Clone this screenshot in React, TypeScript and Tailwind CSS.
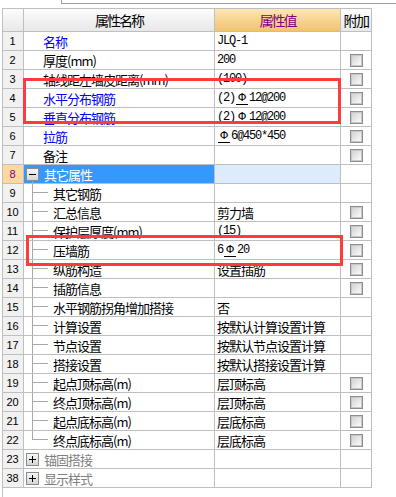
import React from 'react';

type Kind = 'top' | 'child' | 'last' | 'open' | 'closed';
type Row = {
  n: string;
  name: string;
  val?: string;
  cb?: boolean;
  blue?: boolean;
  kind: Kind;
  selected?: boolean;
};

const rows: Row[] = [
  { n: '1', name: '名称', val: 'JLQ-1', blue: true, kind: 'top' },
  { n: '2', name: '厚度(mm)', val: '200', cb: true, kind: 'top' },
  { n: '3', name: '轴线距左墙皮距离(mm)', val: '(100)', cb: true, kind: 'top' },
  { n: '4', name: '水平分布钢筋', val: '(2)Φ12@200', cb: true, blue: true, kind: 'top' },
  { n: '5', name: '垂直分布钢筋', val: '(2)Φ12@200', cb: true, blue: true, kind: 'top' },
  { n: '6', name: '拉筋', val: 'Φ6@450*450', cb: true, blue: true, kind: 'top' },
  { n: '7', name: '备注', val: '', cb: true, kind: 'top' },
  { n: '8', name: '其它属性', kind: 'open', selected: true },
  { n: '9', name: '其它钢筋', kind: 'child' },
  { n: '10', name: '汇总信息', val: '剪力墙', cb: true, kind: 'child' },
  { n: '11', name: '保护层厚度(mm)', val: '(15)', cb: true, kind: 'child' },
  { n: '12', name: '压墙筋', val: '6Φ20', cb: true, kind: 'child' },
  { n: '13', name: '纵筋构造', val: '设置插筋', cb: true, kind: 'child' },
  { n: '14', name: '插筋信息', val: '', cb: true, kind: 'child' },
  { n: '15', name: '水平钢筋拐角增加搭接', val: '否', kind: 'child' },
  { n: '16', name: '计算设置', val: '按默认计算设置计算', kind: 'child' },
  { n: '17', name: '节点设置', val: '按默认节点设置计算', kind: 'child' },
  { n: '18', name: '搭接设置', val: '按默认搭接设置计算', kind: 'child' },
  { n: '19', name: '起点顶标高(m)', val: '层顶标高', cb: true, kind: 'child' },
  { n: '20', name: '终点顶标高(m)', val: '层顶标高', cb: true, kind: 'child' },
  { n: '21', name: '起点底标高(m)', val: '层底标高', cb: true, kind: 'child' },
  { n: '22', name: '终点底标高(m)', val: '层底标高', cb: true, kind: 'last' },
  { n: '23', name: '锚固搭接', kind: 'closed' },
  { n: '38', name: '显示样式', kind: 'closed' },
];

const cjk = "font-['Noto_Sans_CJK_SC',sans-serif] text-[13px] tracking-[-1px] leading-none whitespace-nowrap";
const mono = "font-['Liberation_Mono',monospace] text-[12px] tracking-[-1.2px] leading-none whitespace-nowrap";

function Value({ v }: { v: string }) {
  if (/[\u4e00-\u9fff]/.test(v)) return <span className={cjk}>{v}</span>;
  const parts = v.split('Φ');
  return (
    <span className={mono + ' flex items-center'}>
      {parts.map((p, i) => (
        <React.Fragment key={i}>
          {i > 0 && (
            <span className="inline-block w-[12px] mx-[1px] text-center font-['DejaVu_Sans',sans-serif] text-[11px] tracking-normal leading-none border-b border-black pb-[1px]">
              Φ
            </span>
          )}
          {p}
        </React.Fragment>
      ))}
    </span>
  );
}

function CheckBox() {
  return (
    <div className="w-[13px] h-[13px] border border-[#8e8e8e] shadow-[inset_0_0_0_1px_#c8c8c8] bg-linear-to-br from-[#cfcfcf] to-[#ffffff]" />
  );
}

function ExpandBox({ open }: { open: boolean }) {
  return (
    <div className="relative w-[13px] h-[13px] shrink-0 border border-[#8c8c8c] bg-linear-to-b from-[#f6f6f6] to-[#d6d6d6] flex items-center justify-center">
      <div className="absolute left-[2px] top-[5px] w-[7px] h-px bg-black" />
      {!open && <div className="absolute left-[5px] top-[2px] w-px h-[7px] bg-black" />}
    </div>
  );
}

const line = 'border-[#bfbfbf]';

function NameCell({ r }: { r: Row }) {
  const color = r.selected ? 'text-white' : r.kind === 'closed' ? 'text-[#808080]' : r.blue ? 'text-[#0000ff]' : 'text-black';
  const base = `h-full border-r border-b ${line} flex items-center ${r.selected ? 'bg-[#3399ff]' : ''}`;
  if (r.kind === 'top') {
    return (
      <div className={base + ' pl-[19px]'}>
        <span className={cjk + ' ' + color}>{r.name}</span>
      </div>
    );
  }
  if (r.kind === 'open' || r.kind === 'closed') {
    return (
      <div className={base + ' pl-[2px]'}>
        <div className="relative">
          <ExpandBox open={r.kind === 'open'} />
          {r.kind === 'open' && <div className="absolute left-[6px] top-full w-px h-[3px] bg-[#a8a8a8]" />}
        </div>
        <span className={cjk + ' ml-[5px] ' + color}>{r.name}</span>
      </div>
    );
  }
  return (
    <div className={`h-full border-r border-b ${line} flex items-stretch`}>
      <div className="w-[8px] shrink-0" />
      <div className="w-[16px] shrink-0 flex flex-col">
        <div className="h-[9px] border-l border-b border-[#a8a8a8]" />
        <div className={'flex-1 ' + (r.kind === 'last' ? '' : 'border-l border-[#a8a8a8]')} />
      </div>
      <div className="flex items-center ml-[5px]">
        <span className={cjk + ' ' + color}>{r.name}</span>
      </div>
    </div>
  );
}

export default function App() {
  return (
    <div className="relative w-[396px] h-[497px] bg-white overflow-hidden flex flex-col">
      <div className="h-[4px] ml-[61px] border-l border-b border-[#a0a0a0] shrink-0" />
      <div className={`mt-[4px] ml-[2px] border-l ${line} flex-1`}>
        <div className={`w-[369px] border-t ${line}`}>
          <div className="grid grid-cols-[21px_191px_126px_31px] h-[23px]">
            <div className={`border-r border-b ${line} bg-linear-to-b from-[#fcfcfc] to-[#e8e8e8]`} />
            <div className={`border-r border-b ${line} bg-linear-to-b from-[#fcfcfc] to-[#e8e8e8] flex items-center justify-center`}>
              <span className="font-['Noto_Sans_CJK_SC',sans-serif] text-[14px] tracking-[-2px] leading-none text-black">属性名称</span>
            </div>
            <div className={`border-r border-b ${line} bg-linear-to-b from-[#fde6b7] to-[#f2c36b] flex items-center justify-center`}>
              <span className="font-['Noto_Sans_CJK_SC',sans-serif] text-[14px] tracking-[-2px] leading-none text-[#800080]">属性值</span>
            </div>
            <div className={`border-r border-b ${line} bg-linear-to-b from-[#fcfcfc] to-[#e8e8e8] flex items-center justify-center`}>
              <span className="font-['Noto_Sans_CJK_SC',sans-serif] text-[14px] tracking-[-1.5px] leading-none text-black">附加</span>
            </div>
          </div>
          {rows.map((r) => (
            <div key={r.n} className="grid grid-cols-[21px_191px_126px_31px] h-[19px]">
              <div
                className={`border-r border-b ${line} flex items-center justify-center pr-[1px] ${
                  r.selected ? 'bg-[#fdd9a0] text-[#800080]' : 'bg-[#f1f1f1] text-black'
                }`}
              >
                <span className="font-['Liberation_Sans',sans-serif] text-[11px] leading-none">{r.n}</span>
              </div>
              <NameCell r={r} />
              <div className={`border-r border-b ${line} flex items-center pl-[2px] ${r.selected ? 'bg-[#dcecfd]' : ''}`}>
                {r.val ? <Value v={r.val} /> : null}
              </div>
              <div className={`border-r border-b ${line} flex items-center justify-center pl-[1px] pt-[1px]`}>
                {r.cb ? <CheckBox /> : null}
              </div>
            </div>
          ))}
        </div>
      </div>
      <div className="absolute left-[23px] top-[78px] w-[318px] h-[46px] border-[3px] border-[#ff3c3c]" />
      <div className="absolute left-[26px] top-[235px] w-[317px] h-[31px] border-[3px] border-[#ff3c3c]" />
      <div className="absolute left-[236px] top-[387px] w-[3px] h-[3px] bg-[#ff3c3c]" />
    </div>
  );
}
